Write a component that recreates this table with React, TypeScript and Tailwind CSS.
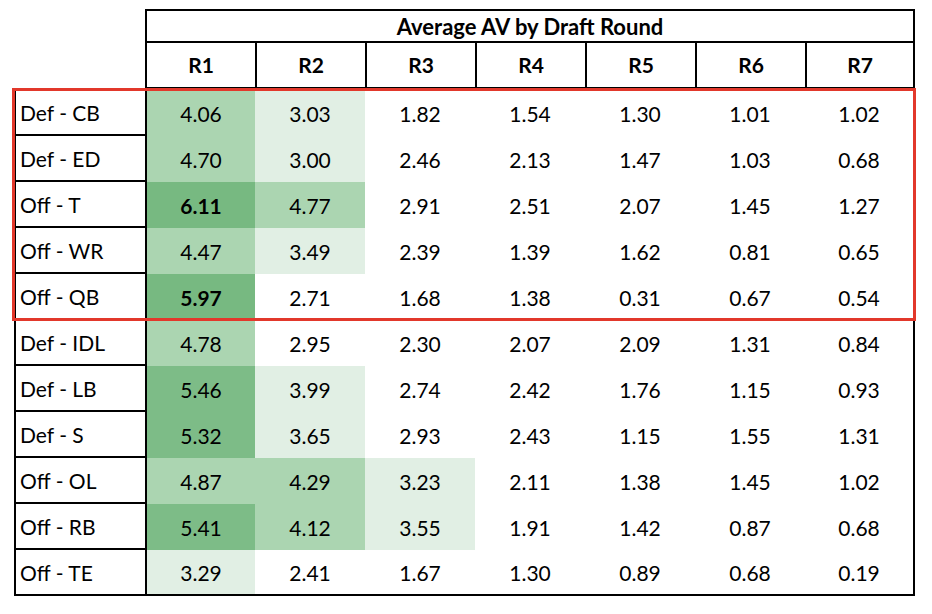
import React from 'react'

const rows: { label: string; values: string[]; bold?: number[] }[] = [
  { label: 'Def - CB', values: ['4.06', '3.03', '1.82', '1.54', '1.30', '1.01', '1.02'] },
  { label: 'Def - ED', values: ['4.70', '3.00', '2.46', '2.13', '1.47', '1.03', '0.68'] },
  { label: 'Off - T', values: ['6.11', '4.77', '2.91', '2.51', '2.07', '1.45', '1.27'], bold: [0] },
  { label: 'Off - WR', values: ['4.47', '3.49', '2.39', '1.39', '1.62', '0.81', '0.65'] },
  { label: 'Off - QB', values: ['5.97', '2.71', '1.68', '1.38', '0.31', '0.67', '0.54'], bold: [0] },
  { label: 'Def - IDL', values: ['4.78', '2.95', '2.30', '2.07', '2.09', '1.31', '0.84'] },
  { label: 'Def - LB', values: ['5.46', '3.99', '2.74', '2.42', '1.76', '1.15', '0.93'] },
  { label: 'Def - S', values: ['5.32', '3.65', '2.93', '2.43', '1.15', '1.55', '1.31'] },
  { label: 'Off - OL', values: ['4.87', '4.29', '3.23', '2.11', '1.38', '1.45', '1.02'] },
  { label: 'Off - RB', values: ['5.41', '4.12', '3.55', '1.91', '1.42', '0.87', '0.68'] },
  { label: 'Off - TE', values: ['3.29', '2.41', '1.67', '1.30', '0.89', '0.68', '0.19'] },
]

const rounds = ['R1', 'R2', 'R3', 'R4', 'R5', 'R6', 'R7']

function shade(v: number) {
  if (v >= 5.9) return 'bg-[#77b981]'
  if (v >= 5) return 'bg-[#7dbc87]'
  if (v >= 4) return 'bg-[#abd5b1]'
  if (v >= 3) return 'bg-[#e1efe4]'
  return 'bg-white'
}

export default function App() {
  return (
    <div
      className="w-[932px] h-[614px] bg-white text-black pl-[14px] pt-[9px]"
      style={{ fontFamily: 'Lato, "Open Sans", sans-serif' }}
    >
      <div className="relative w-[901px]">
        <div className="grid grid-cols-[131px_repeat(7,110px)]">
          {/* Title row */}
          <div className="h-[32px]" />
          <div className="col-span-7 h-[32px] border-2 border-b-0 border-black flex items-center justify-center text-[22px] font-bold">
            Average AV by Draft Round
          </div>

          {/* Round headers */}
          <div className="h-[48px]" />
          {rounds.map((r, i) => (
            <div
              key={r}
              className={`h-[48px] border-t-2 border-b-2 border-l-2 border-black flex items-center justify-center text-[21px] font-bold ${
                i === 6 ? 'border-r-2' : ''
              }`}
            >
              {r}
            </div>
          ))}

          {/* Data */}
          {rows.map((row, ri) => (
            <React.Fragment key={row.label}>
              <div
                className={`h-[46px] border-l-2 border-b-2 border-black flex items-center pl-[4px] pt-[2px] text-[21px] ${
                  ri === 0 ? 'h-[47px]' : ''
                }`}
              >
                {row.label}
              </div>
              {row.values.map((v, ci) => (
                <div
                  key={ci}
                  className={`flex items-center justify-center pt-[2px] text-[21px] border-black ${shade(parseFloat(v))} ${
                    ci === 0 ? 'border-l-2' : ''
                  } ${ci === 6 ? 'border-r-2' : ''} ${ri === rows.length - 1 ? 'border-b-2' : ''} ${
                    row.bold?.includes(ci) ? 'font-bold' : ''
                  }`}
                >
                  {v}
                </div>
              ))}
            </React.Fragment>
          ))}
        </div>

        {/* Highlight box */}
        <div className="absolute left-[-2px] top-[79px] w-[904px] h-[233px] border-[3px] border-[#e2382b] pointer-events-none" />
      </div>
    </div>
  )
}
